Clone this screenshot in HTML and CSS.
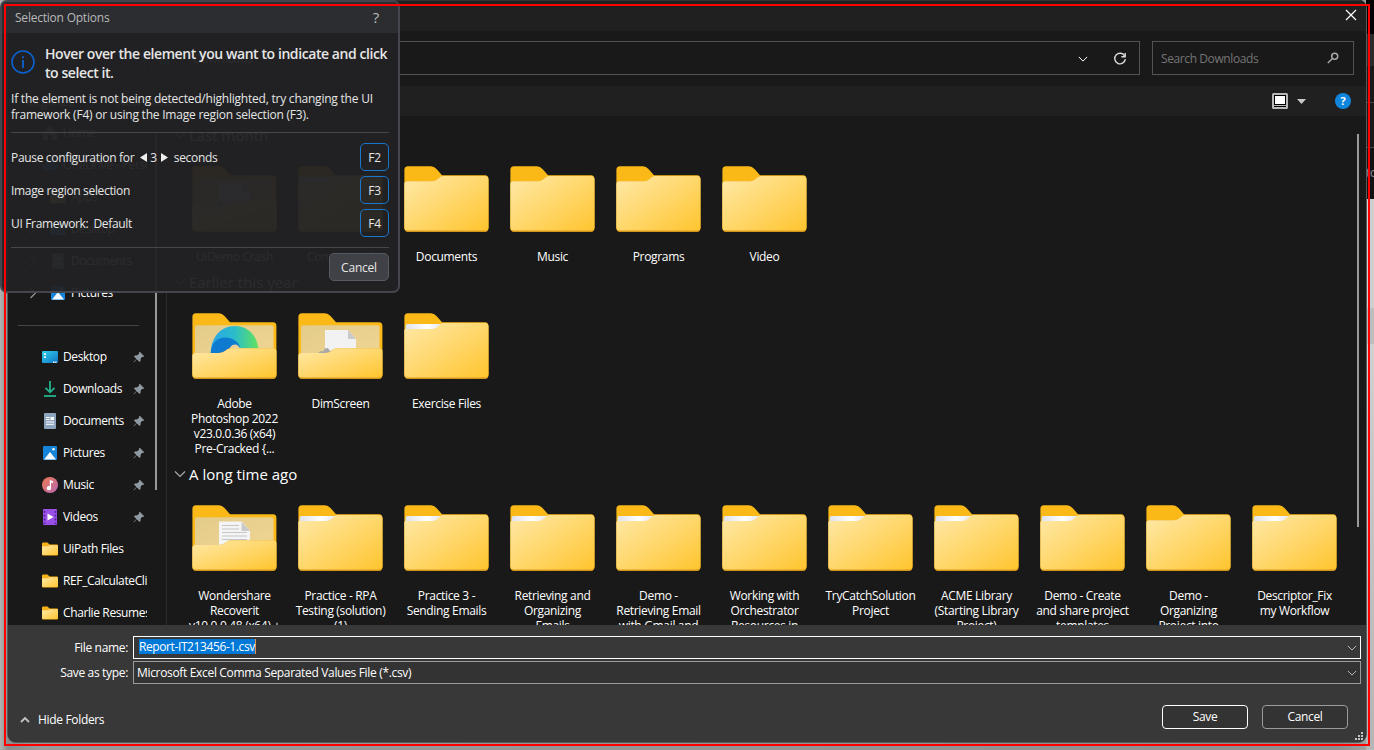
FILE: index.html
```html
<!DOCTYPE html>
<html lang="en">
<head>
<meta charset="utf-8">
<title>Save As</title>
<link rel="stylesheet" href="styles.css">
</head>
<body>
<svg class="defs" width="0" height="0">
  <defs>
    <linearGradient id="gFront" x1="0" y1="0" x2="1" y2="1"><stop offset="0" stop-color="#ffe9a8"/><stop offset="1" stop-color="#ffc52f"/></linearGradient>
    <linearGradient id="gPaper" x1="0" y1="0" x2="1" y2="0"><stop offset="0" stop-color="#dfe3e8"/><stop offset=".6" stop-color="#fff"/><stop offset="1" stop-color="#e4e8ee"/></linearGradient>
    <linearGradient id="gInner" x1="0" y1="0" x2="1" y2="1"><stop offset="0" stop-color="#e3cb8a"/><stop offset="1" stop-color="#f0d695"/></linearGradient>
    <linearGradient id="gEdge" x1="0" y1="0" x2="1" y2="0"><stop offset="0" stop-color="#2aa5ea"/><stop offset=".5" stop-color="#2bbdc9"/><stop offset="1" stop-color="#62e35c"/></linearGradient>
    <linearGradient id="gBlue" x1="0" y1="0" x2="1" y2="1"><stop offset="0" stop-color="#2fd0ec"/><stop offset="1" stop-color="#1273c6"/></linearGradient>
    <linearGradient id="gMusic" x1="0" y1="0" x2="1" y2="1"><stop offset="0" stop-color="#ef7a52"/><stop offset="1" stop-color="#b868b4"/></linearGradient>
  </defs>
  <symbol id="folder-back" viewBox="0 0 85 66"><path d="M0.4 4Q.4 .3 4 .3H27Q30 .3 32.5 3L38 9.3H81Q84.4 9.3 84.4 13V62Q84.4 65.7 81 65.7H4Q.4 65.7 .4 62Z" fill="#fbb917"/></symbol>
  <symbol id="folder" viewBox="0 0 85 66">
    <use href="#folder-back"/>
    <path d="M.4 18Q.4 15.3 3.4 15.3H28Q31 15.3 33 13.5L36 11Q37.5 10 39.5 10H81Q84.4 10 84.4 13.5V62Q84.4 65.7 81 65.7H4Q.4 65.7 .4 62Z" fill="#d9981c"/>
    <path d="M.4 18Q.4 15.3 3.4 15.3H28Q31 15.3 33 13.5L36 11Q37.5 10 39.5 10H81Q84.4 10 84.4 13.5V61Q84.4 64.6 81 64.6H4Q.4 64.6 .4 61Z" fill="url(#gFront)"/>
  </symbol>
  <symbol id="folder-full" viewBox="0 0 85 66">
    <use href="#folder"/>
    <path d="M1.6 17V13Q1.6 11 3.6 11H37L33 14.2Q31 16 28 16H4Q2 16 1.6 17Z" fill="url(#gPaper)"/>
  </symbol>
  <symbol id="open-back" viewBox="0 0 85 66">
    <use href="#folder-back"/>
    <path d="M3 14.5Q3 12.3 5 12.3H79.5Q81.5 12.3 81.5 14.5V45H3Z" fill="url(#gInner)"/>
  </symbol>
  <symbol id="open-front" viewBox="0 0 85 66">
    <path d="M.4 43Q.4 40 3.4 40H27Q30.500 40 33 38L35 36.500Q37 35.300 39.500 35.300H81Q84.400 35.300 84.400 38.500V62Q84.400 65.700 81 65.700H4Q.4 65.700 .4 62Z" fill="#d9981c"/>
    <path d="M.4 43Q.4 40 3.4 40H27Q30.500 40 33 38L35 36.500Q37 35.300 39.500 35.300H81Q84.400 35.300 84.400 38.500V61Q84.400 64.600 81 64.600H4Q.4 64.600 .4 61Z" fill="url(#gFront)"/>
  </symbol>
  <symbol id="folder-edge" viewBox="0 0 85 66">
    <use href="#open-back"/>
    <path d="M18.700 40C19 24 29 13 43 13C57 13 66.700 24 66.700 40Z" fill="url(#gEdge)"/>
    <path d="M18.700 40C19.500 29 26 24.500 33 24.500C41 24.500 46.500 29 48 34L38 42H19Z" fill="#0f7bd0"/>
    <path d="M36 41Q37 32 42.500 31.500Q47.500 31.500 48 37V42Z" fill="#e8d19a"/>
    <use href="#open-front"/>
  </symbol>
  <symbol id="folder-doc" viewBox="0 0 85 66">
    <use href="#open-back"/>
    <path d="M27 17H50L58 26V45H27Z" fill="#f2f2f2"/><path d="M50 17V26H58Z" fill="#c9c9c9"/>
    <path d="M20 40L23 38L25 38.500L27 35.500L30 35L32 38L35 37V42Z" fill="#a8a8a8"/>
    <use href="#open-front"/>
  </symbol>
  <symbol id="folder-text" viewBox="0 0 85 66">
    <use href="#open-back"/>
    <path d="M27 16.500H50L58 26V45H27Z" fill="#f4f4f4"/><path d="M49.500 16.500V26H58Z" fill="#c9c9c9"/>
    <path d="M30 20.500H47M30 24H47M30 27.500H55M30 31H55M30 34.500H55" stroke="#c4c6c8" stroke-width="1"/>
    <use href="#open-front"/>
  </symbol>
  <symbol id="i-folder" viewBox="0 0 16 16"><path d="M0 2.800Q0 1.600 1.200 1.600H5.500L7.500 3.600H15Q16 3.600 16 4.600V13.200Q16 14.400 15 14.400H1Q0 14.400 0 13.400Z" fill="#f7b21a"/><path d="M0 6.200Q0 5.200 1 5.200H6L7.600 4.200H15Q16 4.200 16 5.200V13Q16 14 15 14H1Q0 14 0 13Z" fill="url(#gFront)"/></symbol>
  <symbol id="i-desktop" viewBox="0 0 16 16"><rect y="2" width="16" height="12" rx="1" fill="url(#gBlue)"/><path d="M2 4.300H4V6H2ZM2 7.300H4V9H2ZM11 12.500H12.500V14H11ZM13.200 12.500H14.500V14H13.200Z" fill="#e9faff"/></symbol>
  <symbol id="i-download" viewBox="0 0 16 16"><path d="M8 0V11M3.500 6.800L8 11.300L12.500 6.800" fill="none" stroke="#24b18c" stroke-width="1.800"/><path d="M2 15H14" stroke="#24b18c" stroke-width="1.800"/></symbol>
  <symbol id="i-doc" viewBox="0 0 16 16"><rect x="2" width="12" height="16" rx="1" fill="#8ea5bf"/><path d="M4 4.500H7.500M4 6.500H7.500M4 9H12M4 11.300H12" stroke="#fff"/><rect x="8.500" y="4" width="3.500" height="3" fill="#fff"/></symbol>
  <symbol id="i-pic" viewBox="0 0 16 16"><rect x="1" y="1" width="14" height="14" rx="1" fill="#1584d8"/><path d="M2 14.500L8 7L14 14.500Z" fill="#f1f8ff"/><circle cx="11.500" cy="4.300" r="1.300" fill="#fff"/></symbol>
  <symbol id="i-music" viewBox="0 0 16 16"><circle cx="8" cy="8" r="8" fill="url(#gMusic)"/><path d="M8 3L11 4.300V6.300L9 5.400V10.800A2.100 2.100 0 1 1 7.800 9.200V3Z" fill="#fff"/></symbol>
  <symbol id="i-video" viewBox="0 0 16 16"><rect x="1" width="14" height="16" rx="1" fill="#9a50e8"/><path d="M2.500 2V15M13.500 2V15" stroke="#4c2293" stroke-width="1.600" stroke-dasharray="1.800 2"/><path d="M5.500 4.500L11.500 8L5.500 11.500Z" fill="#fff"/></symbol>
  <symbol id="i-home" viewBox="0 0 16 16"><path d="M8 1L15 7.500V15H10V10H6V15H1V7.500Z" fill="#9aa0a8"/></symbol>
  <symbol id="i-cloud" viewBox="0 0 16 16"><path d="M3 13A3 3 0 0 1 3 7A5 5 0 0 1 12 6A3.500 3.500 0 0 1 13 13Z" fill="#1684d8"/></symbol>
  <symbol id="i-pin" viewBox="0 0 12 12"><path d="M6.800 .8L11.200 5.200L10.200 6L9.400 5.800L7.600 7.600L7.500 10L6.500 11L3.800 8.300L1 11.200L.6 10.800L3.500 8L.9 5.400L2 4.400L4.400 4.300L6.200 2.500L6 1.600Z" fill="#8f9aa3"/></symbol>
  <symbol id="i-down" viewBox="0 0 12 12"><path d="M1 3.500L6 8.500L11 3.500" fill="none" stroke="currentColor" stroke-width="1.200"/></symbol>
</svg>

<div class="desktop">
  <div class="behind"><span class="b1"></span><span class="b2"></span><span class="b3">to</span><span class="b4"></span><span class="b5"></span><span class="b6"></span></div>
  <main class="window">
    <header class="titlebar"><span class="wtitle">Save As</span><svg class="close" width="12" height="12" viewBox="0 0 12 12"><path d="M1 1L11 11M11 1L1 11" stroke="#fff" stroke-width="1.200"/></svg></header>
    <div class="nav">
      <div class="address"><svg width="12" height="12"><use href="#i-download"/></svg><span>Downloads</span>
        <svg class="chev" width="10" height="10"><use href="#i-down"/></svg>
        <svg class="refresh" width="14" height="14" viewBox="0 0 14 14"><path d="M11.800 4.200A5.300 5.300 0 1 0 12.300 7.200" fill="none" stroke="#dcdcdc" stroke-width="1.400"/><path d="M12.200 1V4.700H8.400" fill="none" stroke="#dcdcdc" stroke-width="1.400"/></svg>
      </div>
      <div class="search"><span>Search Downloads</span><svg width="12" height="12" viewBox="0 0 12 12"><circle cx="7.700" cy="4.300" r="3" fill="none" stroke="#a8a8a8" stroke-width="1.500"/><path d="M5.500 6.500L.8 11" stroke="#a8a8a8" stroke-width="1.500"/></svg></div>
    </div>
    <div class="toolbar"><span>Organize</span><span class="nf">New folder</span>
      <svg class="view" width="16" height="16" viewBox="0 0 16 16"><rect width="16" height="16" rx="1.500" fill="#b9b9b9"/><rect x="2" y="2" width="12" height="12" fill="#000"/><rect x="3" y="3" width="10" height="8" fill="#fff"/><path d="M2 12.500H14" stroke="#b9b9b9"/></svg>
      <svg class="tri" width="9" height="5" viewBox="0 0 9 5"><path d="M0 0H9L4.500 5Z" fill="#c8c8c8"/></svg>
      <span class="help">?</span>
    </div>
    <section class="body">
      <aside class="side">
        <ul class="tree">
          <li class="top"><svg class="ic"><use href="#i-home"/></svg>Home</li>
          <li class="top"><svg class="ic"><use href="#i-cloud"/></svg>OneDrive - Personal</li>
          <li class="sub"><svg class="ic"><use href="#i-folder"/></svg>Apps</li>
          <li class="sub"><svg class="ar"><use href="#i-down"/></svg><svg class="ic"><use href="#i-desktop"/></svg>Desktop</li>
          <li class="sub"><svg class="ar"><use href="#i-down"/></svg><svg class="ic"><use href="#i-doc"/></svg>Documents</li>
          <li class="sub"><svg class="ar"><use href="#i-down"/></svg><svg class="ic"><use href="#i-pic"/></svg>Pictures</li>
          <li class="rule"></li>
          <li><svg class="ic"><use href="#i-desktop"/></svg>Desktop<svg class="pin"><use href="#i-pin"/></svg></li>
          <li><svg class="ic"><use href="#i-download"/></svg>Downloads<svg class="pin"><use href="#i-pin"/></svg></li>
          <li><svg class="ic"><use href="#i-doc"/></svg>Documents<svg class="pin"><use href="#i-pin"/></svg></li>
          <li><svg class="ic"><use href="#i-pic"/></svg>Pictures<svg class="pin"><use href="#i-pin"/></svg></li>
          <li><svg class="ic"><use href="#i-music"/></svg>Music<svg class="pin"><use href="#i-pin"/></svg></li>
          <li><svg class="ic"><use href="#i-video"/></svg>Videos<svg class="pin"><use href="#i-pin"/></svg></li>
          <li><svg class="ic"><use href="#i-folder"/></svg>UiPath Files</li>
          <li><svg class="ic"><use href="#i-folder"/></svg>REF_CalculateClient</li>
          <li><svg class="ic"><use href="#i-folder"/></svg>Charlie Resumes</li>
        </ul>
        <div class="sbar"></div>
      </aside>
      <div class="files">
        <h2><svg><use href="#i-down"/></svg>Last month</h2>
        <div class="grid">
          <figure><svg><use href="#folder-doc"/></svg><figcaption>UiDemo Crash</figcaption></figure>
          <figure><svg><use href="#folder-full"/></svg><figcaption>Compressed</figcaption></figure>
          <figure><svg><use href="#folder"/></svg><figcaption>Documents</figcaption></figure>
          <figure><svg><use href="#folder"/></svg><figcaption>Music</figcaption></figure>
          <figure><svg><use href="#folder"/></svg><figcaption>Programs</figcaption></figure>
          <figure><svg><use href="#folder"/></svg><figcaption>Video</figcaption></figure>
        </div>
        <h2><svg><use href="#i-down"/></svg>Earlier this year</h2>
        <div class="grid">
          <figure><svg><use href="#folder-edge"/></svg><figcaption>Adobe<br>Photoshop 2022<br>v23.0.0.36 (x64)<br>Pre-Cracked {...</figcaption></figure>
          <figure><svg><use href="#folder-doc"/></svg><figcaption>DimScreen</figcaption></figure>
          <figure><svg><use href="#folder-full"/></svg><figcaption>Exercise Files</figcaption></figure>
        </div>
        <h2><svg><use href="#i-down"/></svg>A long time ago</h2>
        <div class="grid">
          <figure><svg><use href="#folder-text"/></svg><figcaption>Wondershare<br>Recoverit<br>v10.0.0.48 (x64) +</figcaption></figure>
          <figure><svg><use href="#folder-full"/></svg><figcaption>Practice - RPA<br>Testing (solution)<br>(1)</figcaption></figure>
          <figure><svg><use href="#folder-full"/></svg><figcaption>Practice 3 -<br>Sending Emails</figcaption></figure>
          <figure><svg><use href="#folder-full"/></svg><figcaption>Retrieving and<br>Organizing<br>Emails</figcaption></figure>
          <figure><svg><use href="#folder-full"/></svg><figcaption>Demo -<br>Retrieving Email<br>with Gmail and</figcaption></figure>
          <figure><svg><use href="#folder-full"/></svg><figcaption>Working with<br>Orchestrator<br>Resources in</figcaption></figure>
          <figure><svg><use href="#folder-full"/></svg><figcaption>TryCatchSolution<br>Project</figcaption></figure>
          <figure><svg><use href="#folder-full"/></svg><figcaption>ACME Library<br>(Starting Library<br>Project)</figcaption></figure>
          <figure><svg><use href="#folder-full"/></svg><figcaption>Demo - Create<br>and share project<br>templates</figcaption></figure>
          <figure><svg><use href="#folder"/></svg><figcaption>Demo -<br>Organizing<br>Project into</figcaption></figure>
          <figure><svg><use href="#folder-full"/></svg><figcaption>Descriptor_Fix<br>my Workflow</figcaption></figure>
        </div>
      </div>
      <div class="vbar"></div>
    </section>
    <footer class="foot">
      <div class="field"><label>File name:</label><div class="box name"><span class="sel">Report-IT213456-1.csv</span><svg class="chev" width="10" height="10"><use href="#i-down"/></svg></div></div>
      <div class="field"><label>Save as type:</label><div class="box"><span>Microsoft Excel Comma Separated Values File (*.csv)</span><svg class="chev" width="10" height="10"><use href="#i-down"/></svg></div></div>
      <div class="actions"><svg class="up" width="10" height="10" viewBox="0 0 10 10"><path d="M1 7L5 3L9 7" fill="none" stroke="#c4c4c4" stroke-width="1.800"/></svg><span class="hide">Hide Folders</span><span class="btn primary">Save</span><span class="btn">Cancel</span></div>
      <svg class="grip" width="9" height="9" viewBox="0 0 9 9"><path d="M6 0h2v2H6zM3 3h2v2H3zM6 3h2v2H6zM0 6h2v2H0zM3 6h2v2H3zM6 6h2v2H6z" fill="#c4c4c4"/></svg>
    </footer>
  </main>
  <section class="panel">
    <header><span>Selection Options</span><span class="q">?</span></header>
    <div class="pbody">
      <div class="lead"><svg width="24" height="24" viewBox="0 0 24 24"><circle cx="12" cy="12" r="11" fill="none" stroke="#0b62d2" stroke-width="1.600"/><path d="M12 10V18M12 6.300V8.300" stroke="#0b62d2" stroke-width="1.800"/></svg><h1>Hover over the element you want to indicate and click<br>to select it.</h1></div>
      <p>If the element is not being detected/highlighted, try changing the UI<br>framework (F4) or using the Image region selection (F3).</p>
      <div class="opts">
        <div class="opt"><span>Pause configuration for</span><svg class="la" width="7" height="9" viewBox="0 0 7 9"><path d="M7 0V9L0 4.500Z" fill="#eee"/></svg><span>3</span><svg class="ra" width="7" height="9" viewBox="0 0 7 9"><path d="M0 0V9L7 4.500Z" fill="#eee"/></svg><span>seconds</span><kbd>F2</kbd></div>
        <div class="opt"><span>Image region selection</span><kbd>F3</kbd></div>
        <div class="opt"><span>UI Framework:</span><span class="fw">Default</span><kbd>F4</kbd></div>
      </div>
      <div class="pend"><span class="cancel">Cancel</span></div>
    </div>
  </section>
  <div class="marker"></div>
</div>
</body>
</html>
```
FILE: styles.css
```css
* { box-sizing: border-box; }
body { margin: 0; width: 1374px; height: 750px; overflow: hidden; font: 12px/15px "Open Sans", sans-serif; letter-spacing: -0.33px; color: #fff; }
ul, h1, h2, p, figure { margin: 0; padding: 0; font-weight: 400; }
svg { display: block; flex: none; }
.defs { position: absolute; }
.desktop { position: relative; width: 1374px; height: 750px; padding: 0 8px 8px; background: linear-gradient(90deg, #b2b2b2, #8b8b8b 8px, #9a9a9a 40px, #8f8f8f 1340px, #a5a5a5); }
.behind { position: absolute; right: 0; top: 0; width: 8px; height: 750px; display: flex; flex-direction: column; overflow: hidden; background: #b5b5b5; }
.b1 { height: 34px; background: #000; }
.b2 { height: 32px; background: #2b2b2b; }
.b3 { height: 133px; padding-top: 99px; background: linear-gradient(#191919 36px, #444 36px, #444 37px, #191919 37px, #191919 81px, #444 81px, #444 82px, #121212 82px); color: #8a8f9a; }
.b4 { height: 109px; background: #cfcfcf; }
.b5 { height: 36px; background: #bdbdbd; }
.b6 { flex: 1; background: linear-gradient(#d0d0d0, #b5b5b5); }
.window { position: relative; height: 742px; display: flex; flex-direction: column; background: #191919; border-radius: 0 8px 8px 8px; overflow: hidden; box-shadow: 0 0 0 1px #5a5a5a; }
.titlebar { height: 31px; background: #202020; border-top: 1px solid #333; display: flex; justify-content: space-between; align-items: center; padding: 0 9px 2px 31px; }
.nav { height: 55px; padding: 10px 12px 11px 136px; display: flex; gap: 12px; }
.address, .search { border: 1px solid #535353; display: flex; align-items: center; }
.address { flex: 1; padding: 0 12px 0 14px; gap: 22px; }
.address .chev { margin-left: auto; margin-top: 2px; }
.address .refresh { margin-left: 3px; margin-top: 2px; }
.search { width: 202px; padding: 0 14px 0 8px; justify-content: space-between; color: #757575; letter-spacing: -0.4px; }
.toolbar { height: 30px; background: #202020; display: flex; align-items: center; padding: 0 15px 0 19px; }
.nf { margin-left: 42px; }
.view { margin-left: auto; }
.tri { margin: 0 29px 0 9px; }
.help { width: 16px; height: 16px; border-radius: 50%; background: #0f86dc; text-align: center; font-weight: 700; font-size: 11px; line-height: 16px; }
.body { height: 509px; display: flex; padding-top: 1px; overflow: hidden; }
.side { width: 159px; border-right: 1px solid #2b2b2b; display: flex; flex: none; }
.tree { width: 139px; overflow: hidden; list-style: none; flex: none; letter-spacing: -0.38px; }
.tree li { height: 32px; display: flex; align-items: center; padding: 0 0 1px 34px; gap: 5px; white-space: nowrap; position: relative; }
.tree .ic { margin-top: 1px; }
.tree .sub { padding-left: 42px; }
.tree .ar { position: absolute; left: 19px; width: 12px; height: 12px; transform: rotate(-90deg); color: #999; }
.tree .rule { margin: 0 8px 0 10px; padding: 0; }
.tree .rule::before { content: ""; flex: 1; height: 1px; background: #454545; }
.ic { width: 16px; height: 16px; }
.pin { position: absolute; left: 125px; width: 12px; height: 12px; }
.sbar { width: 2px; height: 356px; margin: 17px 0 0 8px; background: #9a9a9a; }
.files { flex: 1; min-width: 0; padding-left: 7px; }
.files h2 { height: 38px; display: flex; align-items: center; gap: 3px; padding-bottom: 2px; font-size: 15px; letter-spacing: 0; }
.files h2 svg { width: 12px; height: 12px; color: #aaa; }
.grid { display: grid; grid-template-columns: repeat(11, 106px); padding: 11px 0 0 7px; }
figure { text-align: center; }
figure svg { width: 85px; height: 66px; margin: 0 0 17px 10.5px; }
figcaption { white-space: nowrap; padding-left: 1px; }
.vbar { width: 2px; height: 393px; margin: 17px 7px 0 0; background: #9a9a9a; }
.foot { position: relative; flex: 1; background: #383838; padding: 11px 5px 0 0; }
.field { display: flex; align-items: center; height: 23px; margin-bottom: 2px; }
.field label { width: 120px; text-align: right; margin-right: 5px; }
.box { flex: 1; height: 23px; border: 1px solid #9b9b9b; background: #333; display: flex; align-items: center; justify-content: space-between; padding: 0 3px; }
.name { border-color: #fff; background: #383838; padding-left: 5px; }
.sel { background: #0078d7; border-right: 1px solid #e89050; margin-top: -2px; letter-spacing: -0.4px; }
.box .chev { color: #bbb; }
.actions { display: flex; align-items: center; height: 24px; margin: 19px 13px 0 12px; }
.up { margin-top: 9px; }
.hide { margin: 8px auto 0 8px; }
.btn { width: 86px; height: 24px; border: 1px solid #9b9b9b; border-radius: 4px; text-align: center; line-height: 22px; background: #333; position: relative; top: 2px; }
.primary { border-color: #fff; margin-right: 14px; }
.grip { position: absolute; right: 2px; bottom: 1px; }
.panel { position: absolute; left: 0; top: 0; width: 400px; height: 293px; border: 2px solid #45464d; border-radius: 7px; background: rgba(33, 33, 36, .955); color: #e6e6e6; overflow: hidden; letter-spacing: -0.22px; }
.panel header { height: 31px; background: #2c2d31; color: #b9b9b9; display: flex; justify-content: space-between; align-items: center; padding: 0 18px 0 13px; }
.q { font-size: 15px; margin-right: 1px; }
.pbody { padding: 11px 9px 0; }
.lead { display: flex; gap: 10px; align-items: center; height: 38px; }
.lead svg { margin-top: -3px; }
h1 { font-size: 14px; line-height: 19px; font-weight: 600; letter-spacing: -0.42px; white-space: nowrap; margin-top: -1px; }
.panel p { line-height: 16px; margin: 9px 0 9px; white-space: nowrap; }
.opts { border-top: 1px solid #45474b; border-bottom: 1px solid #45474b; height: 116px; padding-top: 10px; letter-spacing: -0.33px; }
.opt { display: flex; align-items: center; height: 28px; margin-bottom: 5px; }
.fw { margin-left: 5px; }
kbd { margin-left: auto; width: 29px; height: 28px; border: 1px solid #1877cc; border-radius: 5px; font: inherit; line-height: 27px; text-align: center; }
.la { margin: 0 3px 0 6px; }
.ra { margin: 0 6px 0 4px; }
.pend { display: flex; justify-content: flex-end; padding-top: 5px; }
.cancel { width: 60px; height: 28px; background: #404147; border: 1px solid #565a62; border-radius: 5px; text-align: center; line-height: 27px; }
.marker { position: absolute; left: 4px; top: 4px; width: 1366px; height: 742px; border: 2px solid #f00; }
```
